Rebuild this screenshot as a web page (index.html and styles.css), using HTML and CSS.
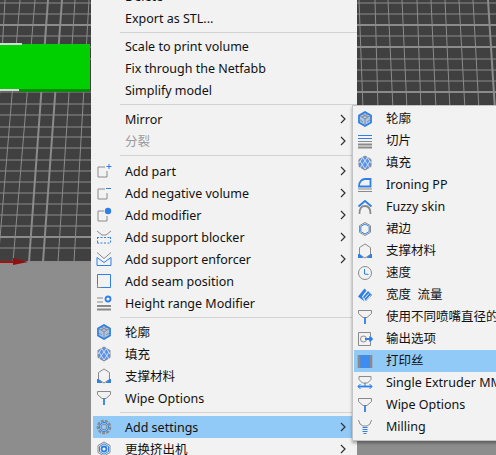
FILE: index.html
```html
<!DOCTYPE html>
<html>
<head>
    <title>Context menu</title>
    <link rel="stylesheet" href="styles.css">
</head>
<body>
    <svg width="0" height="0" class="defs">
        <defs>
            <symbol id="i-part" viewBox="0 0 16 16"><path d="M9 4H2v10h9V8" class="sg"/><path d="M13 1v5M10.500 3.500h5" class="sb"/></symbol>
            <symbol id="i-neg" viewBox="0 0 16 16"><path d="M9 4H2v10h9V8" class="sg"/><path d="M10 3.500h5" class="sb"/></symbol>
            <symbol id="i-mod" viewBox="0 0 16 16"><path d="M8 4H2v10h9V9" class="sg"/><circle cx="12" cy="4" r="3.200" class="fb"/></symbol>
            <symbol id="i-blocker" viewBox="0 0 16 16"><path d="M1 2l5 4h4l5-4" class="sg"/><path d="M1 8.500h14M1 14h14M1.500 8v6M14.500 8v6" class="sb dash"/></symbol>
            <symbol id="i-enforcer" viewBox="0 0 16 16"><path d="M1 1.500l7 6 7-6" class="sg"/><path d="M1 6.500l7 5 7-5v8H1z" class="sb"/></symbol>
            <symbol id="i-seam" viewBox="0 0 16 16"><path d="M1.500 1.500h13v13h-13z" class="sb"/><path d="M1.500 11v3.500H5" class="sg"/></symbol>
            <symbol id="i-height" viewBox="0 0 16 16"><path d="M1 3h6M1 7h6" class="sg"/><circle cx="12" cy="4" r="2.500" class="sb2"/><path d="M1 11h14M1 14.500h14" class="sg2"/></symbol>
            <symbol id="i-outline" viewBox="0 0 16 16"><path d="M8 1l6 3.500v7L8 15l-6-3.500v-7z" class="flb2 sb2"/><path d="M2.500 4.500L8 8l5.500-3.500M8 8v6.500M5 3l6 3M11 3L5 6M2 8l4 3M14 8l-4 3" class="sg"/></symbol>
            <symbol id="i-infill" viewBox="0 0 16 16"><path d="M8 1l6 3.500v7L8 15l-6-3.500v-7z" class="flb"/><path d="M8 1l6 3.500v7L8 15l-6-3.500v-7z" class="sg"/><path d="M3 6l5 8M6 3l7 10M10 2l4 6M13 6l-5 8M10 3L3 13M6 2L2 8" class="sw"/></symbol>
            <symbol id="i-support" viewBox="0 0 16 16"><path d="M8 1l5.500 3.500v7L8 15l-5.500-3.500v-7z" class="sg"/><path d="M1 15v-4l1.500 0L6 14.500V15zM15 15v-4l-1.500 0L10 14.500V15z" class="fb"/></symbol>
            <symbol id="i-wipe" viewBox="0 0 16 16"><path d="M1.500 1.500h13v3L10 8.500H6L1.500 4.500z" class="sg"/><path d="M8 8.500V15" class="sb2"/></symbol>
            <symbol id="i-gear" viewBox="0 0 16 16"><circle cx="8" cy="8" r="6.200" class="sg2 teeth"/><circle cx="8" cy="8" r="4.500" class="sb"/><circle cx="8" cy="8" r="2.800" class="sg"/></symbol>
            <symbol id="i-extruder" viewBox="0 0 16 16"><path d="M8 1l6 3.500v7L8 15l-6-3.500v-7z" class="sg"/><path d="M8 2.800l4.500 2.600v5.200L8 13.200l-4.500-2.600V5.400z" class="sb"/><circle cx="8" cy="8" r="2.500" class="sb2"/></symbol>
            <symbol id="i-slice" viewBox="0 0 16 16"><path d="M1 2.500h14M1 5.500h14" class="sb"/><path d="M1 8.500h14" class="sg"/><path d="M1 11.500h14M1 14.500h14" class="sg2"/></symbol>
            <symbol id="i-iron" viewBox="0 0 16 16"><path d="M2 9.500c0-5 3-7.500 6-7.500h5.500v7.500z" class="sb2"/><path d="M1 12h14M1 14.500h14" class="sg"/></symbol>
            <symbol id="i-fuzzy" viewBox="0 0 16 16"><path d="M1.500 7.500L8 2l6.500 5.500" class="sb2"/><path d="M2.500 15c0-6 2-8 5.500-8s5.500 2 5.500 8" class="sg2"/></symbol>
            <symbol id="i-skirt" viewBox="0 0 16 16"><path d="M8 1.500l5.500 3.200v6.600L8 14.500l-5.500-3.200V4.700z" class="sg"/><path d="M8 3l4.200 2.400v5.200L8 13l-4.200-2.400V5.400z" class="sb"/></symbol>
            <symbol id="i-speed" viewBox="0 0 16 16"><circle cx="8" cy="8" r="6.500" class="sg"/><path d="M7.500 4v5l4 .5" class="sb"/></symbol>
            <symbol id="i-width" viewBox="0 0 16 16"><path d="M1 9.500L7.500 1.500l2 2-4.500 6 2.500 5z" class="fb"/><path d="M6 10l5-6 4 4-6 6z" class="fb"/><path d="M7.500 11.500l4.500-5M9.500 13l4-4.500" class="sw1"/></symbol>
            <symbol id="i-output" viewBox="0 0 16 16"><path d="M13.500 5V1.500h-12v13h12V11" class="sg"/><circle cx="6.500" cy="8" r="3" class="sg"/><path d="M8 8h7M12.500 5.500L15 8l-2.500 2.500" class="sb2"/></symbol>
            <symbol id="i-filament" viewBox="0 0 16 16"><rect x="3" y="2" width="10" height="13" class="fbl"/><path d="M2 2v13M14 2v13" class="sg2 wide"/></symbol>
            <symbol id="i-mm" viewBox="0 0 16 16"><path d="M2 1.500h12v3L10.500 8h-5L2 4.500z" class="sg"/><path d="M1 11.500h14" class="sb2"/><path d="M3.500 9L1 11.500 3.500 14M12.500 9l2.500 2.500-2.500 2.500M8 8v3" class="sb"/></symbol>
            <symbol id="i-mill" viewBox="0 0 16 16"><path d="M1.500 1l1.500 4 3 2h4l3-2 1.500-4" class="sg"/><path d="M5.500 8.500h5M5.500 10.500h5M5.500 12.500h5M6.500 14.500h3" class="sb"/></symbol>
            <symbol id="i-arrow" viewBox="0 0 8 10"><path d="M2 1l4 4-4 4" class="chev"/></symbol>
        </defs>
    </svg>

    <div class="scene">
        <!-- 3D view behind the menus -->
        <svg class="view" width="496" height="455" viewBox="0 0 496 455">
            <rect width="496" height="455" fill="#8d8d8d"/>
            <rect width="100" height="262" fill="#404040"/>
            <rect x="350" width="146" height="110" fill="#404040"/>
            <path class="grid" d="M0 3h100M0 14h100M0 36h100M0 47h100M0 59h100M0 92h100M0 104h100M0 115h100M0 127h100M0 137h100M0 148h100M0 160h100M0 171h100M0 182h100M0 193h100M0 204h100M0 215h100M0 226h100M0 248h100
                M5 0L-10 262M20 0L-2 262M35 0L13 262M75 0L58 262M89 0L74 262
                M350 3h146M350 14h146M350 36h146M350 59h146M350 70h146M350 81h146
                M359 0l4 110M375 0l3 110M388 0l5 110M402 0l5 110M417 0l4 110M431 0l5 110M445 0l5 110M459 0l6 110M473 0l6 110"/>
            <path class="grid thick" d="M0 25h100M0 237h100M48 0L29 262M62 0L43 262M350 25h146M350 47h146M350 92h146M488 0l7 110"/>
            <path d="M0 262h100" class="grid thick"/>
            <rect y="44" width="90" height="47" fill="#00cf00"/>
            <rect x="19" y="89" width="71" height="3" fill="#0c8a0c"/>
            <path d="M0 44h22M0 90h19" stroke="#d8d8d8" stroke-width="2"/>
            <path d="M0 262h16" stroke="#a80f0f" stroke-width="2"/>
            <path d="M13 258l15 4-15 3z" fill="#8f1010"/>
        </svg>

        <div class="menu menu--main">
            <div class="row"><span class="icon"></span><span class="label">Delete</span></div>
            <div class="row"><span class="icon"></span><span class="label">Export as STL...</span></div>
            <div class="sep sep--narrow"></div>
            <div class="row"><span class="icon"></span><span class="label">Scale to print volume</span></div>
            <div class="row"><span class="icon"></span><span class="label">Fix through the Netfabb</span></div>
            <div class="row"><span class="icon"></span><span class="label">Simplify model</span></div>
            <div class="sep"></div>
            <div class="row"><span class="icon"></span><span class="label">Mirror</span><svg class="chevron"><use href="#i-arrow"/></svg></div>
            <div class="row row--off"><span class="icon"></span><span class="label">分裂</span><svg class="chevron"><use href="#i-arrow"/></svg></div>
            <div class="sep sep--wide"></div>
            <div class="row"><svg class="icon"><use href="#i-part"/></svg><span class="label">Add part</span><svg class="chevron"><use href="#i-arrow"/></svg></div>
            <div class="row"><svg class="icon"><use href="#i-neg"/></svg><span class="label">Add negative volume</span><svg class="chevron"><use href="#i-arrow"/></svg></div>
            <div class="row"><svg class="icon"><use href="#i-mod"/></svg><span class="label">Add modifier</span><svg class="chevron"><use href="#i-arrow"/></svg></div>
            <div class="row"><svg class="icon"><use href="#i-blocker"/></svg><span class="label">Add support blocker</span><svg class="chevron"><use href="#i-arrow"/></svg></div>
            <div class="row"><svg class="icon"><use href="#i-enforcer"/></svg><span class="label">Add support enforcer</span><svg class="chevron"><use href="#i-arrow"/></svg></div>
            <div class="row"><svg class="icon"><use href="#i-seam"/></svg><span class="label">Add seam position</span></div>
            <div class="row"><svg class="icon"><use href="#i-height"/></svg><span class="label">Height range Modifier</span></div>
            <div class="sep"></div>
            <div class="row"><svg class="icon"><use href="#i-outline"/></svg><span class="label">轮廓</span></div>
            <div class="row"><svg class="icon"><use href="#i-infill"/></svg><span class="label">填充</span></div>
            <div class="row"><svg class="icon"><use href="#i-support"/></svg><span class="label">支撑材料</span></div>
            <div class="row"><svg class="icon"><use href="#i-wipe"/></svg><span class="label">Wipe Options</span></div>
            <div class="sep"></div>
            <div class="row row--active"><svg class="icon"><use href="#i-gear"/></svg><span class="label">Add settings</span><svg class="chevron"><use href="#i-arrow"/></svg></div>
            <div class="row"><svg class="icon"><use href="#i-extruder"/></svg><span class="label">更换挤出机</span><svg class="chevron"><use href="#i-arrow"/></svg></div>
        </div>

        <div class="menu menu--sub">
            <div class="row"><svg class="icon"><use href="#i-outline"/></svg><span class="label">轮廓</span></div>
            <div class="row"><svg class="icon"><use href="#i-slice"/></svg><span class="label">切片</span></div>
            <div class="row"><svg class="icon"><use href="#i-infill"/></svg><span class="label">填充</span></div>
            <div class="row"><svg class="icon"><use href="#i-iron"/></svg><span class="label">Ironing PP</span></div>
            <div class="row"><svg class="icon"><use href="#i-fuzzy"/></svg><span class="label">Fuzzy skin</span></div>
            <div class="row"><svg class="icon"><use href="#i-skirt"/></svg><span class="label">裙边</span></div>
            <div class="row"><svg class="icon"><use href="#i-support"/></svg><span class="label">支撑材料</span></div>
            <div class="row"><svg class="icon"><use href="#i-speed"/></svg><span class="label">速度</span></div>
            <div class="row"><svg class="icon"><use href="#i-width"/></svg><span class="label">宽度 &nbsp;流量</span></div>
            <div class="row"><svg class="icon"><use href="#i-wipe"/></svg><span class="label">使用不同喷嘴直径的挤出机</span></div>
            <div class="row"><svg class="icon"><use href="#i-output"/></svg><span class="label">输出选项</span></div>
            <div class="row row--active"><svg class="icon"><use href="#i-filament"/></svg><span class="label">打印丝</span></div>
            <div class="row"><svg class="icon"><use href="#i-mm"/></svg><span class="label">Single Extruder MM Setup</span></div>
            <div class="row"><svg class="icon"><use href="#i-wipe"/></svg><span class="label">Wipe Options</span></div>
            <div class="row"><svg class="icon"><use href="#i-mill"/></svg><span class="label">Milling</span></div>
        </div>
    </div>
</body>
</html>
```

FILE: styles.css
```css
body {
    margin: 0;
    font-family: "Noto Sans", "Noto Sans CJK SC", sans-serif;
    font-size: 12.5px;
    color: #111;
}

.defs {
    position: absolute;
}

.scene {
    position: relative;
    width: 496px;
    height: 455px;
    overflow: hidden;
}

.view {
    position: absolute;
    top: 0;
    left: 0;
}

.grid {
    fill: none;
    stroke: #8b8b8b;
    stroke-width: 1;
}

.grid.thick {
    stroke-width: 2;
}

.menu {
    position: absolute;
    background: #f2f2f2;
    box-sizing: border-box;
}

.menu--main {
    top: -15px;
    left: 91px;
    width: 266px;
    padding-left: 2px;
}

.menu--sub {
    top: 105px;
    left: 352px;
    width: 200px;
    padding: 2px 0 2px 1px;
    border: 1px solid #c4c4c4;
    border-width: 1px 0 1px 1px;
    box-shadow: 0 2px 3px rgba(0, 0, 0, .35);
}

.row {
    display: flex;
    align-items: center;
    height: 22px;
    white-space: nowrap;
}

.row--active {
    background: #91c9f7;
}

.row--off {
    color: #9a9a9a;
}

.icon {
    flex: none;
    width: 16px;
    height: 16px;
    margin: 0 13px 0 3px;
}

.label {
    flex: 1;
    line-height: 18px;
    padding-top: 2px;
}

.menu--sub .label {
    padding-top: 0;
}

.chevron {
    flex: none;
    width: 8px;
    height: 10px;
    margin-right: 10px;
}

.chev {
    fill: none;
    stroke: #333;
    stroke-width: 1.2;
}

.row--off .chev {
    stroke: #aaa;
}

.sep {
    height: 1px;
    margin: 3px 0 3px 27px;
    background: #d2d2d2;
}

.sep--narrow {
    margin-bottom: 2px;
}

.sep--wide {
    margin-bottom: 4px;
}

/* icon strokes: gray and blue, thin and heavy */
.sg, .sb, .sb2, .sg2, .sw, .sw1 {
    fill: none;
    stroke-width: 1;
}

.sg { stroke: #8a8a8a; }
.sg2 { stroke: #8a8a8a; stroke-width: 1.8; }
.sb { stroke: #2f7fe6; }
.sb2 { stroke: #2f7fe6; stroke-width: 1.8; }
.sw { stroke: #e8eefa; stroke-width: .8; }
.sw1 { stroke: #f2f2f2; stroke-width: 1; }
.fb { fill: #2f7fe6; }
.fbl { fill: #3f8cf0; }
.flb { fill: #5c93e8; }
.flb2 { fill: #a9c6ef; }
.dash { stroke-dasharray: 2 1.5; }
.teeth { stroke-dasharray: 3 1.2; stroke-width: 2.2; }
.wide { stroke-width: 2.6; }
```
